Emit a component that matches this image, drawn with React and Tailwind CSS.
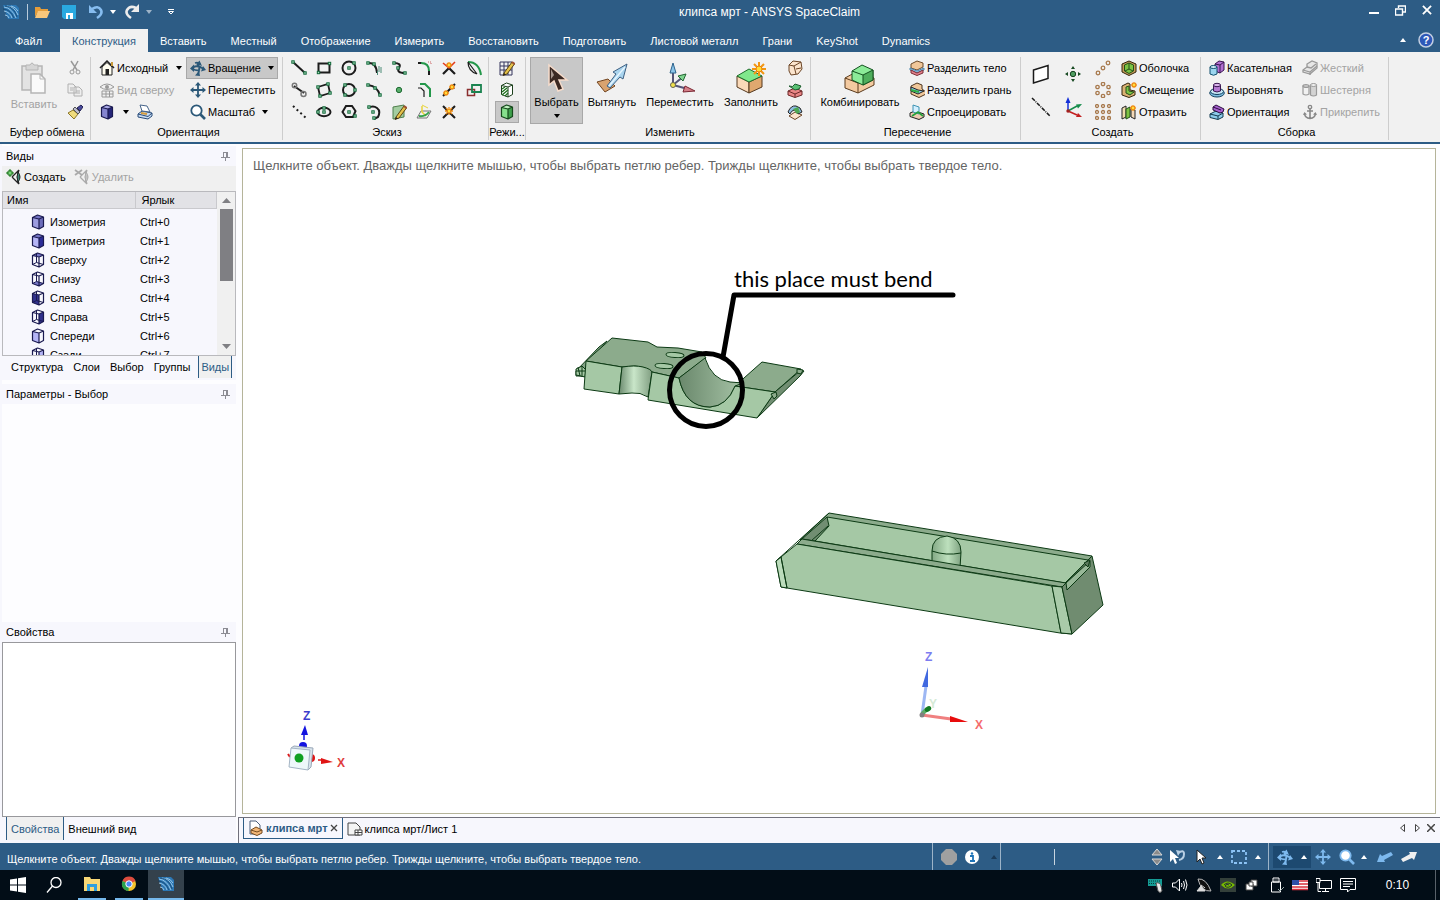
import { useState } from 'react';

const INK = '#1c1c1c';

const Icon = ({ size = 16, box = 16, className = '', children }) => (
  <svg
    width={size}
    height={size}
    viewBox={`0 0 ${box} ${box}`}
    fill="none"
    aria-hidden="true"
    className={`shrink-0 ${className}`}
  >
    {children}
  </svg>
);

const Caret = ({ up = false, className = '' }) => (
  <svg width="6" height="4" viewBox="0 0 6 4" aria-hidden="true" className={`shrink-0 ${className}`}>
    <path d={up ? 'M0 4h6L3 0z' : 'M0 0h6L3 4z'} fill="currentColor" />
  </svg>
);

// Box seen from above: each face can be filled on its own
const Box = ({ top = 'none', left = 'none', right = 'none', bottom = 'none', line = '#1a1a50', wire = false }) => (
  <Icon>
    <path d="M2.500 12.500 7.500 10.500 13.500 12.500 9 15z" fill={bottom} />
    <path d="M2.500 3.500 7.500 1 13.500 3 9 5z" fill={top} />
    <path d="M2.500 3.500 9 5V15L2.500 12.500z" fill={left} />
    <path d="M9 5 13.500 3V12.500L9 15z" fill={right} />
    <path d="M2.500 3.500 7.500 1 13.500 3V12.500L9 15 2.500 12.500zM2.500 3.500 9 5l4.500-2M9 5v10" stroke={line} strokeWidth="1.200" strokeLinejoin="round" />
    {wire && <path d="M6.500 1.500v9M6.500 10.500l-4 2M6.500 10.500l7 2" stroke={line} strokeWidth="1" />}
  </Icon>
);

const AppLogo = ({ size = 16 }) => (
  <Icon size={size}>
    <path d="M0 1h13l3 3v11H5z" fill="#2c77b4" />
    <path d="M1 3q8 1 12 11M4 2q8 1 11 9M1 7q6 1 8 7M8 2q5 1 7 5M2 11q3 0 4 3" stroke="#a4d0ee" strokeWidth=".9" />
    <path d="M0 5q7 0 11 9M2 2q9 0 12 11" stroke="#123f66" strokeWidth=".7" />
  </Icon>
);

const OrbitIcon = ({ color = '#2b5878', size = 16 }) => (
  <Icon size={size}>
    <path d="M3 7.500Q7 4.500 13 8.500M3 9Q6 11 10 10M7 3.500Q11 7 8 14M5 3Q8 2 10 4" stroke={color} strokeWidth="1.800" />
    <path d="M0 8.500 4 4.500V12zM16 10l-5 1.500 2-5.500zM9.500 .500 12 6 6.500 4zM5 15.500l5 .500-1-5z" fill={color} />
  </Icon>
);

const MoveIcon = ({ color = '#2b5878', size = 16 }) => (
  <Icon size={size}>
    <path d="M8 2v12M2 8h12" stroke={color} strokeWidth="1.800" />
    <path d="M8 0l3 3.500H5zM8 16l3-3.500H5zM0 8l3.500-3v6zM16 8l-3.500-3v6z" fill={color} />
  </Icon>
);

const ZoomIcon = ({ color = '#2b5878', fill = '#fff', size = 16 }) => (
  <Icon size={size}>
    <circle cx="6.500" cy="6.500" r="5.200" fill={fill} stroke={color} strokeWidth="1.800" />
    <path d="M10.500 10.500 15 15" stroke={color} strokeWidth="2.600" />
  </Icon>
);

const PinIcon = () => (
  <Icon size={9} box={9}>
    <path d="M2 .5h5M2.500 .5v5M6.500 .5v5M5.500 .5v5M0 5.500h9M4.500 5.500V9" stroke="#8b8b93" />
  </Icon>
);

const EyeIcon = ({ off = false }) => (
  <Icon>
    <path d="M6 8 13 1M6 8l7 7M13 1q-3 7 0 14" stroke={off ? '#aaa' : '#222'} strokeWidth="1.300" />
    <path d="M12 3q4 5 0 10-2-5 0-10z" fill={off ? '#c4c4c4' : '#3f8a78'} stroke={off ? '#aaa' : '#222'} />
    {off ? (
      <path d="M1 1l7 5M8 1 1 6" stroke="#aaa" strokeWidth="1.800" />
    ) : (
      <path d="M3 1h2v2h2v2H5v2H3V5H1V3h2z" fill="#7ad67a" stroke="#1c701c" />
    )}
  </Icon>
);

const dots = (points) =>
  points.map(([x, y]) => (
    <rect key={`${x}-${y}`} x={x - 1.2} y={y - 1.2} width="2.4" height="2.4" fill="#a9dabd" stroke="#146b3c" />
  ));

const burst = (x, y, r = 3) => (
  <g stroke="#f08a12" strokeWidth="1.300">
    <path d={`M${x - r} ${y}h${r * 2}M${x} ${y - r}v${r * 2}M${x - r + 1} ${y - r + 1}l${r * 2 - 2} ${r * 2 - 2}M${x + r - 1} ${y - r + 1}l${2 - r * 2} ${r * 2 - 2}`} />
    <circle cx={x} cy={y} r="1.200" fill="#ffe23c" stroke="none" />
  </g>
);

const pencil = (
  <g>
    <path d="M5 13 13 2l2.500 2L8 14l-4 1.500z" fill="#e5c24a" stroke="#5c4411" />
    <path d="M4 15.500 5 13l2 1.500z" fill="#222" />
    <path d="M13 2l2.500 2" stroke="#a05033" strokeWidth="2" />
  </g>
);

const sketchTools = [
  ['Линия', <><path d="M2 2l12 11" stroke={INK} strokeWidth="2" />{dots([[2, 2], [14, 13]])}</>],
  ['Прямоугольник', <><path d="M2.500 3.500h11v9h-11z" stroke={INK} strokeWidth="2" />{dots([[2.5, 12.5], [13.5, 3.5]])}</>],
  ['Окружность', <><circle cx="8" cy="8" r="6.500" stroke={INK} strokeWidth="2" />{dots([[8, 8], [13, 3]])}</>],
  ['Касательная дуга', <><path d="M2 3q8-1 9 10" stroke={INK} strokeWidth="2" /><path d="M13 6v6M15 7v6M11.500 11v4" stroke="#4a8b76" />{dots([[2, 3], [8, 4]])}</>],
  ['Сплайн', <><path d="M3 3q8 0 5 5t6 5" stroke={INK} strokeWidth="2" />{dots([[3, 3], [7, 8], [14, 13]])}</>],
  ['Скругление', <><path d="M2 3h4" stroke={INK} strokeWidth="2" /><path d="M5 3q8 0 8 8" stroke="#23974a" strokeWidth="2" /><path d="M13 11v4" stroke={INK} strokeWidth="2" /><path d="M12 2h3v3" stroke="#c66" strokeDasharray="1 1" /></>],
  ['Отсечь', <><path d="M2 14 8 8l6 6" stroke={INK} strokeWidth="2.200" /><path d="M2 3l6 5 6-6" stroke="#e23b1c" strokeWidth="1.600" />{burst(8, 5, 3)}</>],
  ['Изгиб', <><path d="M2 2q11 0 13 13" stroke="#23974a" strokeWidth="2" /><path d="M2 2q0 9 9 12M2 2l9 12" stroke={INK} strokeWidth="1.200" /></>],
  ['Касательная линия', <><path d="M3 4l10 7" stroke={INK} strokeWidth="2" /><circle cx="3.500" cy="3.500" r="2.200" stroke="#777" strokeWidth="1.500" /><circle cx="12.500" cy="12" r="2.500" stroke="#777" strokeWidth="1.500" /></>],
  ['Прямоугольник по трём точкам', <><path d="M2 5l10-3 2 9-10 3z" stroke={INK} strokeWidth="1.800" />{dots([[2, 5], [12, 2], [4, 14], [14, 11]])}</>],
  ['Окружность по трём точкам', <><circle cx="8" cy="8" r="6" stroke={INK} strokeWidth="2" />{dots([[4, 3], [14, 8], [4, 13]])}</>],
  ['Дуга по трём точкам', <><path d="M2 3q10 1 12 11" stroke={INK} strokeWidth="2" />{dots([[2, 3], [9, 6], [14, 13]])}</>],
  ['Точка', <circle cx="8" cy="8" r="2.700" fill="#58ad6a" stroke="#1f6b33" />],
  ['Смещение кривой', <><path d="M2 6h3l3 3v6" stroke={INK} strokeWidth="1.200" /><path d="M4 2h5l5 5v8" stroke="#23974a" strokeWidth="2" /></>],
  ['Разделить', <><path d="M2 14 14 2" stroke={INK} strokeWidth="2" /><path d="M11 4l3 3M3 9l3 3" stroke="#888" />{burst(5, 11, 3)}{burst(11, 5, 3)}</>],
  ['Масштабировать', <><path d="M1.500 7.500h7v6h-7z" stroke="#8b2f2f" strokeWidth="1.500" /><path d="M6 3h9v7H6z" stroke="#1b8350" strokeWidth="1.800" /></>],
  ['Вспомогательная линия', <path d="M2 2l13 12" stroke={INK} strokeWidth="2" strokeDasharray="2 3" />],
  ['Эллипс', <><ellipse cx="8" cy="8" rx="6.500" ry="4.300" stroke={INK} strokeWidth="2" />{dots([[8, 8], [8, 4], [2, 8]])}</>],
  ['Многоугольник', <><path d="M5 2h6l3.500 5L12 13H5L1.500 8z" stroke={INK} strokeWidth="2" />{dots([[8, 8], [14, 12]])}</>],
  ['Дуга', <><path d="M2 4q5-3 9 0t1 9l-4 2" stroke={INK} strokeWidth="2" />{dots([[3, 3], [7, 8], [8, 14]])}</>],
  ['Проекция', <><path d="M2 3l11-2v12L2 15z" fill="#a3cda0" stroke="#4f7f4c" />{pencil}</>],
  ['Проекция на эскиз', <><path d="M1 14l4-7h10l-4 7z" stroke="#777" /><path d="M6 2v6l4 4" stroke="#e8d33c" strokeWidth="1.500" /><path d="M3 12q6 1 10-4" stroke="#35a14b" strokeWidth="2" /><path d="M6 1l6 3" stroke="#e8d33c" /></>],
  ['Соединить', <><path d="M2 2l12 12M2 14 14 2" stroke={INK} strokeWidth="2" />{burst(8, 7, 4)}</>],
];

// Solids used in the small ribbon buttons
const solids = {
  splitBody: (
    <><path d="M2 4l6-3 6 2v4l-6 3-6-2z" fill="#f0c79a" stroke="#6b4a2a" /><path d="M1 8l7 3 7-3v2l-7 3-7-3z" fill="#8fc7ec" stroke="#4a86ad" /><path d="M2 10v3l6 2.500 6-2.500v-3l-6 3z" fill="#e3808b" stroke="#7a3038" /></>
  ),
  splitFace: (
    <><path d="M2 4l6-3 5 2v4l4 3v2l-7 3.500L2 12z" fill="#f0c79a" stroke="#4d3620" /><path d="M2 5l7 3 6 1-6 3-7-3z" fill="#8fc7ec" stroke="#222" /><path d="M2 8l8 2" stroke="#2fae43" strokeWidth="2" /></>
  ),
  project: (
    <><path d="M1 9l5-2 9 3v3l-5 2.500-9-3z" fill="#edcbb2" stroke="#222" /><path d="M4 1l6 2v7l-6-2z" fill="#d4efff" stroke="#3d93b2" /><path d="M3 12l6-4 5 4" stroke="#24a03a" strokeWidth="1.800" /></>
  ),
  shell: (
    <><path d="M1 4l7-3 7 3v8l-7 3.500L1 12z" fill="#c49a58" stroke="#33240c" /><path d="M3.500 5l4.500-2 4.500 2v6L8 13.500 3.500 11z" fill="#7cc343" stroke="#24501a" /><path d="M8 3v6l-4 2M8 9l4 2" stroke="#24501a" /></>
  ),
  offset: (
    <><path d="M1 4l6-3 2 1v6l5 1v4l-6 2.500L1 13z" fill="#d9b173" stroke="#33240c" /><path d="M5 5l3-1v5l5 1-4 3-4-2z" fill="#7cc343" stroke="#24501a" />{burst(13, 3, 3)}</>
  ),
  mirror: (
    <><path d="M1 4l4-2v11l-4 2z" fill="#efdcae" stroke="#222" /><path d="M5 5l4-2v10l-4 2z" fill="#7cc343" stroke="#24501a" /><path d="M10 5l4 1v9l-4-2z" fill="#f3d9b8" stroke="#222" />{burst(12, 4, 3)}</>
  ),
  tangent: (
    <><path d="M6 4l4-3 5 1v8l-4 3-5-2z" fill="#b06fd1" stroke="#38164f" /><path d="M6 4l5 1v8M11 5l4-3" stroke="#38164f" /><path d="M1 7v7q3.500 2.500 7 0V7z" fill="#9bd5ef" stroke="#12506e" /><ellipse cx="4.500" cy="7" rx="3.500" ry="1.500" fill="#d2eefa" stroke="#12506e" /></>
  ),
  align: (
    <><ellipse cx="8" cy="11" rx="7.300" ry="4" fill="#7fbfe2" stroke="#12405e" /><ellipse cx="8" cy="9.500" rx="6.500" ry="3" fill="#c8e8f6" stroke="#12405e" /><path d="M4.500 3v6q3.500 2 7 0V3z" fill="#b378d0" stroke="#38164f" /><ellipse cx="8" cy="3" rx="3.500" ry="1.700" fill="#d9b4ea" stroke="#38164f" /></>
  ),
  orient: (
    <><path d="M1 10l6-3 7 2v4l-5 2.500-8-2z" fill="#8ccbea" stroke="#123a4e" /><path d="M1 10l8 2 5-3M9 12v3" stroke="#123a4e" /><path d="M4 3l3-2 8 4-1 3-3 1-7-3z" fill="#a75fce" stroke="#2b0f40" /><path d="M4 3l8 3" stroke="#2b0f40" /></>
  ),
  rigid: (
    <><path d="M1 10l4-3V4l5-3 5 2v5l-7 6-7-2z" fill="#e6e6e6" stroke="#999" strokeWidth="1.300" /><path d="M1 10l7 2 7-6M5 7l4 1 5-4M8 12v3" stroke="#999" strokeWidth="1.300" /></>
  ),
  gear: (
    <><path d="M1 4v8q3 2 6 0V4z" stroke="#999" strokeWidth="1.200" /><ellipse cx="4" cy="4" rx="3" ry="1.500" stroke="#999" strokeWidth="1.200" /><path d="M8.500 3v10q3 2 6 0V3z" fill="#d3d3d3" stroke="#999" strokeWidth="1.200" /><ellipse cx="11.500" cy="3" rx="3" ry="1.500" fill="#eee" stroke="#999" /></>
  ),
  anchor: (
    <><circle cx="8" cy="3" r="1.700" stroke="#888" strokeWidth="1.300" /><path d="M8 5v10M5 7h6M2.500 9.500Q3 14 8 14.500q5-.500 5.500-5" stroke="#888" strokeWidth="1.600" /><path d="M1 11l1.500-3L5 10.500zM15 11l-1.500-3L11 10.500z" fill="#888" /></>
  ),
  blend: (
    <><path d="M2 5l4-4 8 1 1 7-4 5-7 1-2-4z" fill="#fbe4cd" stroke="#6b4526" /><path d="M2 5l5 1 2 8M7 6l7-4M9 9l5-1" stroke="#6b4526" /></>
  ),
  replace: (
    <><path d="M1 9l7-3 7 3v4l-7 2.500L1 13z" fill="#e98585" stroke="#6a2929" /><path d="M1 9l7 3 7-3M8 12v3" stroke="#6a2929" /><path d="M2 4q4 2 6-2l6 2q-1 4-6 4z" fill="#59c073" stroke="#1c5a2c" /></>
  ),
  patch: (
    <><path d="M2 12l6-4 7 3-7 4.500z" fill="#fbe4cd" stroke="#6b4526" /><path d="M1 8q3-7 8-6 5 1 6 6l-4 2q-1-4-4-4-3 1-4 4z" fill="#8cbce2" stroke="#222" /><path d="M6 5l5-2 2 5-3 2z" fill="#4da853" /></>
  ),
};

const SmallButton = ({ icon, label, disabled = false, active = false, caret = false, className = '' }) => (
  <button
    type="button"
    disabled={disabled}
    className={`flex h-[22px] items-center gap-0.5 whitespace-nowrap px-1 ${active ? 'bg-[#c8c8c8] outline outline-1 -outline-offset-1 outline-[#a8a8a8]' : ''} ${disabled ? 'text-[#a3a3a3]' : 'text-black'} ${className}`}
  >
    {icon}
    <span>{label}</span>
    {caret && <Caret className="ml-auto" />}
  </button>
);

const BigButton = ({ icon, label, active = false, disabled = false, caret = false, className = '' }) => (
  <button
    type="button"
    disabled={disabled}
    className={`flex h-[67px] flex-col items-center whitespace-nowrap pt-1 ${active ? 'border border-[#a8a8a8] bg-[#c8c8c8]' : 'border border-transparent'} ${disabled ? 'text-[#a3a3a3]' : 'text-black'} ${className}`}
  >
    {icon}
    <span className="leading-4">{label}</span>
    {caret && <Caret className="mt-1" />}
  </button>
);

const IconButton = ({ label, children, className = '' }) => (
  <button type="button" aria-label={label} title={label} className={`flex items-center justify-center ${className}`}>
    {children}
  </button>
);

const Group = ({ title, className = '', children }) => (
  <section className={`flex shrink-0 flex-col border-r border-[#cdcdcd] ${className}`}>
    <div className="flex h-[67px]">{children}</div>
    <h2 className="whitespace-nowrap text-center leading-4">{title}</h2>
  </section>
);

const ribbonTabs = [
  'Файл', 'Конструкция', 'Вставить', 'Местный', 'Отображение', 'Измерить', 'Восстановить',
  'Подготовить', 'Листовой металл', 'Грани', 'KeyShot', 'Dynamics',
];

const TitleBar = () => (
  <header className="flex h-6 items-center bg-[#2d5c85] text-white">
    <div className="mr-[104px] flex flex-1 items-center gap-3 pl-[3px]">
      <AppLogo />
      <div className="-ml-1 h-4 w-px bg-[#b9cbdb]" />
      <IconButton label="Открыть" className="-ml-1.5">
        <Icon><path d="M1 13V3h5l1 2h7v3H4z" fill="#e59d3a" /><path d="M1 14 4 7h12l-3 7z" fill="#f9c77b" /></Icon>
      </IconButton>
      <IconButton label="Сохранить">
        <Icon size={14} box={14}><path d="M0 0h14v14H2l-2-2z" fill="#2aa9e0" /><path d="M4 8h7v6H4z" fill="#fff" /><path d="M6 10h2v4H6z" fill="#2aa9e0" /></Icon>
      </IconButton>
      <IconButton label="Отменить" className="gap-1.5">
        <Icon><path d="M1 1v8h8z" fill="#86bdf0" /><path d="M4 5q6-4 9 1 2 4-4 8" stroke="#86bdf0" strokeWidth="2.600" /></Icon>
        <Caret />
      </IconButton>
      <IconButton label="Вернуть" className="-ml-1 gap-1.5">
        <Icon><path d="M15 0v8H7z" fill="#ececec" /><path d="M12 4Q6 1 3 6q-2 4 4 8" stroke="#ececec" strokeWidth="2.600" /></Icon>
        <Caret className="text-[#9eb4c8]" />
      </IconButton>
      <IconButton label="Настройка панели">
        <Icon size={6} box={6} className="ml-1"><path d="M0 .5h6M.5 2.500h5L3 5z" stroke="#fff" /></Icon>
      </IconButton>
    </div>
    <h1 className="whitespace-nowrap text-xs">клипса мрт - ANSYS SpaceClaim</h1>
    <div className="flex flex-1 items-center justify-end gap-4 pb-1 pr-2">
      <IconButton label="Свернуть"><Icon size={10} box={10}><path d="M0 8h10" stroke="#fff" strokeWidth="2" /></Icon></IconButton>
      <IconButton label="Восстановить окно"><Icon size={11} box={11}><path d="M3.500 3V1h7v6H8M.5 4h7v6h-7z" stroke="#fff" strokeWidth="1.400" /></Icon></IconButton>
      <IconButton label="Закрыть"><Icon size={10} box={11}><path d="M1 1l9 9M10 1l-9 9" stroke="#fff" strokeWidth="2" /></Icon></IconButton>
    </div>
  </header>
);

const Tabs = () => {
  const [current, setCurrent] = useState('Конструкция');
  return (
    <nav className="flex h-7 items-center bg-[#2d5c85] pl-[3px]">
      {ribbonTabs.map((tab) => (
        <button
          key={tab}
          type="button"
          onClick={() => setCurrent(tab)}
          className={`h-[23px] self-end whitespace-nowrap px-3 first:mr-1.5 ${tab === current ? 'bg-[#f1f1f1] text-[#2d5c85]' : 'text-white'}`}
        >
          {tab}
        </button>
      ))}
      <div className="ml-auto flex items-center gap-3 pr-1.5 pt-1 text-white">
        <IconButton label="Свернуть ленту"><Caret up /></IconButton>
        <IconButton label="Справка">
          <Icon box={16}>
            <circle cx="8" cy="8" r="7" fill="#2e58b8" stroke="#c3cfe2" strokeWidth="1.500" />
            <text x="8" y="12" fontSize="11" fontWeight="700" textAnchor="middle" fill="#fff">?</text>
          </Icon>
        </IconButton>
      </div>
    </nav>
  );
};

const Ribbon = () => (
  <div className="flex items-stretch overflow-hidden border-b-2 border-[#2d5c85] bg-[#f1f1f1] pb-0.5 pt-[5px]">
    <Group title="Буфер обмена" className="w-[91px] pl-1">
      <BigButton
        disabled
        label="Вставить"
        className="w-[60px]"
        icon={
          <Icon size={32} box={32} className="mb-0.5">
            <path d="M4 4h20v24H4z" fill="#e3e3e3" stroke="#b5b5b5" strokeWidth="1.500" />
            <path d="M8 3h4q2-4 4 0h4v5H8z" fill="#d6d6d6" stroke="#b5b5b5" />
            <path d="M13 12h9l5 5v14H13z" fill="#fafafa" stroke="#b5b5b5" strokeWidth="1.500" />
            <path d="M22 12v5h5" stroke="#b5b5b5" />
          </Icon>
        }
      />
      <div className="flex flex-col">
        <IconButton label="Вырезать" className="h-[22px] w-[22px]">
          <Icon><path d="M4 1l6 9M11 1 6 10" stroke="#999" strokeWidth="1.500" /><circle cx="5" cy="12" r="2" stroke="#999" /><circle cx="11" cy="12" r="2" stroke="#999" /></Icon>
        </IconButton>
        <IconButton label="Копировать" className="h-[22px] w-[22px]">
          <Icon><path d="M1 2h5l3 3v6H1zM7 5h5l3 3v6H7z" fill="#eee" stroke="#b0b0b0" /><path d="M9 9h4M9 11h4M3 6h3M3 8h3" stroke="#b0b0b0" /></Icon>
        </IconButton>
        <IconButton label="Формат по образцу" className="h-[22px] w-[22px]">
          <Icon><path d="M1 9l5-3 5 4-4 5z" fill="#f0dc7c" stroke="#8a7428" /><path d="M6 5l5 5 2-2-5-5z" fill="#b9b9cc" stroke="#555" /><path d="M10 4l4-3 2 2-3 4z" fill="#4a4a9a" stroke="#222255" /></Icon>
        </IconButton>
      </div>
    </Group>

    <Group title="Ориентация" className="w-[192px] pl-1">
      <div className="flex w-[91px] flex-col">
        <SmallButton caret label="Исходный" icon={<Icon><path d="M1 8 8 1l7 7" stroke="#222" strokeWidth="1.500" /><path d="M3 7v8h10V7L8 2.500z" fill="#fffdf0" stroke="#222" /><path d="M6.500 9h3.500v6H6.500z" fill="#222" /><path d="M12 2h2v4h-2z" fill="#c89a3a" /></Icon>} />
        <SmallButton disabled label="Вид сверху" icon={<Icon><path d="M1 5q7-6 14 0-7 5-14 0z" stroke="#999" /><circle cx="8" cy="5" r="2" fill="#999" /><path d="M3 9h11v6H3zM3 12h11M7 9v6M10.500 9v6" stroke="#999" /></Icon>} />
        <div className="flex h-[22px] items-center gap-2 pl-1">
          <IconButton label="Проекция" className="gap-2"><Box top="#a9a9e6" left="#8585d0" right="#26267a" /><Caret /></IconButton>
          <IconButton label="Вид на плоскость">
            <Icon><path d="M1 10l4-3 10 2v3l-4 3-10-2z" fill="#c9dcf2" stroke="#274a78" /><path d="M1 10l10 2.500L15 9" stroke="#274a78" /><path d="M3 1l7 1 3 6-8-1z" fill="#fff" stroke="#46648a" /><path d="M4 9l6 1" stroke="#d49b3d" strokeWidth="2" /></Icon>
          </IconButton>
        </div>
      </div>
      <div className="flex w-[92px] flex-col">
        <SmallButton active caret label="Вращение" icon={<OrbitIcon />} />
        <SmallButton label="Переместить" icon={<MoveIcon />} />
        <SmallButton label="Масштаб" caret icon={<ZoomIcon />} className="w-[86px]" />
      </div>
    </Group>

    <Group title="Эскиз" className="w-[206px] pl-[3px]">
      <div className="grid grid-cols-8 content-start">
        {sketchTools.map(([label, art]) => (
          <IconButton key={label} label={label} className="h-[22px] w-[25px]"><Icon>{art}</Icon></IconButton>
        ))}
      </div>
    </Group>

    <Group title="Режи..." className="w-[37px]">
      <div className="flex w-full flex-col items-center">
        <IconButton label="Режим эскиза" className="h-[22px] w-6"><Icon><path d="M1 2h12v13H1zM1 6h12M1 10h12M5 2v13M9 2v13" stroke="#34345c" />{pencil}</Icon></IconButton>
        <IconButton label="Режим сечения" className="h-[22px] w-6"><Icon><path d="M2.500 3.500 7.500 1 13.500 3V12.500L9 15 2.500 12.500zM2.500 3.500 9 5l4.500-2M9 5v10" stroke="#1c401c" fill="#fff" /><path d="M3 7l3-2M3 10l5-4M3 13l6-5M6 14l3-3" stroke="#1c701c" strokeWidth="1.300" /></Icon></IconButton>
        <IconButton label="Трёхмерный режим" className="h-[22px] w-6 border border-[#a8a8a8] bg-[#c8c8c8]"><Box top="#c0f2c0" left="#86e08c" right="#3fa04c" line="#164a1c" /></IconButton>
      </div>
    </Group>

    <Group title="Изменить" className="w-[285px] pl-1">
      <BigButton active caret label="Выбрать" className="w-[53px]" icon={
        <Icon size={32} box={32}>
          <path d="M8 3v20l5-4 4 10 5-2-4-9h8z" fill="#3a2822" stroke="#f6dccb" strokeWidth="1.500" />
          <path d="M10 7v10l3-4z" fill="#a89890" />
        </Icon>
      } />
      <BigButton label="Вытянуть" className="w-[58px]" icon={
        <Icon size={32} box={32}>
          <path d="M1 20l11-3 7 7-10 6z" fill="#d9a36f" stroke="#704420" />
          <path d="M11 24 20 12l-3-2L31 2l-4 15-3-2-10 11z" fill="#a9d4ee" stroke="#3d5f82" strokeLinejoin="round" />
          <path d="M13 24 29 5" stroke="#e5f5ff" strokeWidth="1.500" />
        </Icon>
      } />
      <BigButton label="Переместить" className="w-[78px]" icon={
        <Icon size={32} box={32}>
          <path d="M9 23V9M9 23l11-9M9 23l15 4" stroke="#557" strokeWidth="2" />
          <path d="M9 1l3 10H6z" fill="#8bc5ea" stroke="#2c628c" />
          <path d="M22 12l-3 7-5-5z" fill="#80d590" stroke="#226632" />
          <path d="M31 29l-12 1 2-6z" fill="#d47f88" stroke="#7a2632" />
          <circle cx="9" cy="23" r="2.500" fill="#f0e04c" stroke="#665" />
        </Icon>
      } />
      <BigButton label="Заполнить" className="w-[64px]" icon={
        <Icon size={32} box={32}>
          <path d="M2 14l12 6v11L2 25z" fill="#fad9b8" stroke="#54381e" />
          <path d="M14 20l13-6v11l-13 6z" fill="#dfa86f" stroke="#54381e" />
          <path d="M2 14l12-7 13 7-13 6z" fill="#80e88c" stroke="#1d6d2a" />
          <path d="M24 0v14M17 7h14M19 2l10 10M29 2 19 12" stroke="#f39612" strokeWidth="2" />
          <circle cx="24" cy="7" r="3" fill="#ffdd35" stroke="#e87e10" />
        </Icon>
      } />
      <div className="flex flex-col">
        <IconButton label="Скругление граней" className="h-[22px] w-6"><Icon>{solids.blend}</Icon></IconButton>
        <IconButton label="Заменить" className="h-[22px] w-6"><Icon>{solids.replace}</Icon></IconButton>
        <IconButton label="Сопряжение" className="h-[22px] w-6"><Icon>{solids.patch}</Icon></IconButton>
      </div>
    </Group>

    <Group title="Пересечение" className="w-[210px] pl-1">
      <BigButton label="Комбинировать" className="w-[90px]" icon={
        <Icon size={32} box={32}>
          <path d="M1 16l11-6 18 6v7l-16 8L1 26z" fill="#f4caa0" stroke="#5a3b1d" />
          <path d="M1 16l13 5v10M14 21l5-2" stroke="#5a3b1d" />
          <path d="M8 9l10-6 11 5v10l-10 5-11-5z" fill="#8ceb98" stroke="#14521f" />
          <path d="M19 13l10-5v10l-10 5z" fill="#4fae5c" stroke="#14521f" />
          <path d="M8 9l11 4" stroke="#14521f" />
        </Icon>
      } />
      <div className="flex flex-col">
        <SmallButton label="Разделить тело" icon={<Icon>{solids.splitBody}</Icon>} />
        <SmallButton label="Разделить грань" icon={<Icon>{solids.splitFace}</Icon>} />
        <SmallButton label="Спроецировать" icon={<Icon>{solids.project}</Icon>} />
      </div>
    </Group>

    <Group title="Создать" className="w-[180px] pl-1">
      <div className="flex w-8 flex-col">
        <IconButton label="Плоскость" className="h-[33px]"><Icon size={20} box={20}><path d="M2.500 6 17 1.500v13L2.500 19z" fill="#fff" stroke="#1a1a1a" strokeWidth="1.500" /></Icon></IconButton>
        <IconButton label="Ось" className="h-[33px]"><Icon size={20} box={20}><path d="M1 1l18 18" stroke="#1a1a1a" strokeWidth="1.500" strokeDasharray="4 1 1 1" /></Icon></IconButton>
      </div>
      <div className="flex w-8 flex-col">
        <IconButton label="Опорная точка" className="h-[33px]"><Icon><circle cx="8" cy="8" r="2.700" fill="#4f9d60" stroke="#164420" /><path d="M8 0l2 3H6zM8 16l2-3H6zM0 8l3-2v4zM16 8l-3-2v4z" fill="#174a22" /></Icon></IconButton>
        <IconButton label="Система координат" className="h-[33px]">
          <Icon size={20} box={20}><path d="M5 14V4" stroke="#1430d8" strokeWidth="1.500" /><path d="M5 0l2.500 6h-5z" fill="#1430d8" /><path d="M5 14l9-5" stroke="#148c4a" strokeWidth="1.500" /><path d="M19 7l-6 .5 2 4z" fill="#148c4a" /><path d="M5 14l9 4" stroke="#c22020" strokeWidth="1.500" /><path d="M19 20l-6 0 2-4z" fill="#c22020" /><circle cx="5" cy="14" r="1.700" fill="#a32020" /></Icon>
        </IconButton>
      </div>
      <div className="flex w-7 flex-col">
        <IconButton label="Линейный массив" className="h-[22px]"><Icon><g stroke="#a87a4e" strokeWidth="1.300"><circle cx="3" cy="13" r="1.800" /><circle cx="8" cy="8" r="1.800" /><circle cx="13" cy="3" r="1.800" /></g></Icon></IconButton>
        <IconButton label="Круговой массив" className="h-[22px]"><Icon><g stroke="#a87a4e" strokeWidth="1.300">{[[8, 2], [13.5, 5], [13.5, 11], [8, 14], [2.5, 11], [2.5, 5]].map(([x, y]) => <circle key={`${x}${y}`} cx={x} cy={y} r="1.700" />)}</g></Icon></IconButton>
        <IconButton label="Массив заполнения" className="h-[22px]"><Icon><g stroke="#a87a4e" strokeWidth="1.300">{[2, 8, 14].map((y) => [2, 8, 14].map((x) => <circle key={`${x}${y}`} cx={x} cy={y} r="1.500" />))}</g></Icon></IconButton>
      </div>
      <div className="flex flex-col">
        <SmallButton label="Оболочка" icon={<Icon>{solids.shell}</Icon>} />
        <SmallButton label="Смещение" icon={<Icon>{solids.offset}</Icon>} />
        <SmallButton label="Отразить" icon={<Icon>{solids.mirror}</Icon>} />
      </div>
    </Group>

    <Group title="Сборка" className="w-[188px] pl-1">
      <div className="flex w-[93px] flex-col">
        <SmallButton label="Касательная" icon={<Icon>{solids.tangent}</Icon>} />
        <SmallButton label="Выровнять" icon={<Icon>{solids.align}</Icon>} />
        <SmallButton label="Ориентация" icon={<Icon>{solids.orient}</Icon>} />
      </div>
      <div className="flex flex-col">
        <SmallButton disabled label="Жесткий" icon={<Icon>{solids.rigid}</Icon>} />
        <SmallButton disabled label="Шестерня" icon={<Icon>{solids.gear}</Icon>} />
        <SmallButton disabled label="Прикрепить" icon={<Icon>{solids.anchor}</Icon>} />
      </div>
    </Group>
  </div>
);

const views = [
  { name: 'Изометрия', key: 'Ctrl+0', box: { top: '#7474c4', left: '#9c9ce0', right: '#6c6cba' } },
  { name: 'Триметрия', key: 'Ctrl+1', box: { top: '#7474c4', left: '#b4b4f6', right: '#2c2c98' } },
  { name: 'Сверху', key: 'Ctrl+2', box: { top: '#7474c4', wire: true } },
  { name: 'Снизу', key: 'Ctrl+3', box: { bottom: '#7474c4', wire: true } },
  { name: 'Слева', key: 'Ctrl+4', box: { left: '#30308c', wire: true } },
  { name: 'Справа', key: 'Ctrl+5', box: { right: '#30308c', wire: true } },
  { name: 'Спереди', key: 'Ctrl+6', box: { left: '#b4b4f6' } },
  { name: 'Сзади', key: 'Ctrl+7', box: { right: '#b4b4f6', wire: true } },
];

const PanelHeader = ({ title }) => (
  <div className="flex h-5 items-center justify-between bg-[#f7f7fd] pl-1 pr-1.5">
    <h2>{title}</h2>
    <IconButton label={`Закрепить: ${title}`}><PinIcon /></IconButton>
  </div>
);

const Sidebar = () => (
  <aside className="flex w-[236px] shrink-0 flex-col border-l-2 border-[#f7f7fd] pt-0.5">
    <PanelHeader title="Виды" />
    <div className="flex h-[25px] items-center gap-1 bg-[#f0f0f0] pb-1 pl-1">
      <button type="button" className="flex items-center gap-0.5"><EyeIcon />Создать</button>
      <button type="button" disabled className="ml-1 flex items-center gap-0.5 text-[#a3a3a3]"><EyeIcon off />Удалить</button>
    </div>
    <div className="flex h-[165px] border border-[#b9b9bd] bg-[#f7f7fd]">
      <div className="flex-1 overflow-hidden">
        <table className="w-full table-fixed border-collapse text-left">
          <thead>
            <tr className="h-4 border-b border-[#c9c9cd] bg-[#e2e2e6]">
              <th className="w-[132px] border-r border-[#c9c9cd] py-0 pl-1 font-normal">Имя</th>
              <th className="border-r border-[#c9c9cd] py-0 pl-1.5 font-normal">Ярлык</th>
            </tr>
          </thead>
          <tbody>
            <tr className="h-1"><td colSpan="2" className="p-0" /></tr>
            {views.map((view) => (
              <tr key={view.name} className="h-[19px]">
                <td className="py-0 pl-[27px]">
                  <span className="flex items-center gap-1"><Box {...view.box} />{view.name}</span>
                </td>
                <td className="py-0 pl-[5px]">{view.key}</td>
              </tr>
            ))}
          </tbody>
        </table>
      </div>
      <div className="flex w-[18px] flex-col items-center bg-[#f0f0f0] py-1 text-[#7f7f83]">
        <Icon size={9} box={9}><path d="M0 7h9L4.500 2z" fill="currentColor" /></Icon>
        <div className="mt-1 h-[72px] w-[13px] bg-[#7f7f83]" />
        <Icon size={9} box={9} className="mt-auto"><path d="M0 2h9L4.500 7z" fill="currentColor" /></Icon>
      </div>
    </div>
    <div className="flex h-6 items-start gap-1.5 bg-[#f7f7fd] pl-[7px] [&>button]:h-[22px] [&>button]:px-0.5">
      <button type="button">Структура</button>
      <button type="button">Слои</button>
      <button type="button">Выбор</button>
      <button type="button">Группы</button>
      <button type="button" className="border-x border-[#2d5c85] bg-[#f0f0f0] text-[#2d5c85]">Виды</button>
    </div>
    <div className="mt-1 flex flex-1 flex-col">
      <PanelHeader title="Параметры - Выбор" />
    </div>
    <PanelHeader title="Свойства" />
    <div className="h-[175px] border border-[#98989c] bg-white" />
    <div className="flex h-[26px] items-start bg-[#f7f7fd] pl-1 [&>button]:h-[23px] [&>button]:px-1">
      <button type="button" className="border-x border-[#2d5c85] bg-[#f0f0f0] text-[#2d5c85]">Свойства</button>
      <button type="button">Внешний вид</button>
    </div>
  </aside>
);

const LINE = '#0c3a14';

// Group origin is shifted so both parts share the window's coordinate space
const Scene = () => (
  <svg className="absolute inset-0 h-full w-full" aria-label="Трёхмерная сцена">
    <defs>
      <linearGradient id="bore" x1="0" x2="1">
        <stop offset="0" stopColor="#6a886c" />
        <stop offset="1" stopColor="#a6c3a6" />
      </linearGradient>
      <linearGradient id="neck" x1="0" x2="1">
        <stop offset="0" stopColor="#6b8a6e" />
        <stop offset=".45" stopColor="#c9e6c9" />
        <stop offset="1" stopColor="#809e81" />
      </linearGradient>
      <linearGradient id="peg" x1="0" x2="1">
        <stop offset="0" stopColor="#83a985" />
        <stop offset=".55" stopColor="#bde0bd" />
        <stop offset="1" stopColor="#7fa381" />
      </linearGradient>
    </defs>
    <g transform="translate(-243 -149)" strokeLinejoin="round">
      <g stroke={LINE} strokeWidth="1">
        <path d="M599 347l-23 24v5l10 0 3-14 18-21z" fill="#83a486" />
        <path d="M576 369l6-3 4 4-1 7-9-2z" fill="#a5c8a5" />
        <path d="M578 367l2 9M582 366v11M576 371h9" fill="none" />
        <path d="M586 361 612 338 648 342 657 347 678 348 702 352 706 358 679 378 652 372Q646 367 635 366L622 367z" fill="#8cab8c" />
        <path d="M735 386 762 362 801 369 775 392z" fill="#8cab8c" />
        <path d="M775 392 801 370 804 371 800 376 757 418z" fill="#718e72" />
        <path d="M586 361 622 367 619 394 584 389z" fill="#a5c8a5" />
        <path d="M622 367Q635 365 643 367T652 372L648 397Q640 392 632 393L619 394z" fill="url(#neck)" />
        <path d="M652 372 679 378Q685 407 710 407 727 406 735 386L775 392 757 418 648 400z" fill="#a5c8a5" />
        <path d="M679 378 705 358Q712 380 730 382L743 383 735 386Q727 406 710 407 685 407 679 378z" fill="url(#bore)" />
        <path d="M771 394l5-2 1 4-3 3zM797 369l6 1-2 4-4-1z" fill="#8cab8c" />
        <ellipse cx="675" cy="355" rx="9" ry="2.500" fill="#a5c8a5" transform="rotate(4 675 355)" />
        <ellipse cx="664" cy="366" rx="9" ry="2.500" fill="#a5c8a5" transform="rotate(4 664 366)" />
      </g>

      <g stroke={LINE} strokeWidth="1">
        <path d="M829 513 1092 556 1088 560 1065 583 800 540z" fill="#8cab8c" />
        <path d="M827 517 1088 560 1065 583 815 541z" fill="#a5c8a5" />
        <path d="M827 517 829 526 815 541 802 539z" fill="#718e72" />
        <path d="M828 526 811 541" fill="none" />
        <path d="M932 566 932 551Q932 537 947 536 961 538 961 552L960 568z" fill="url(#peg)" />
        <path d="M932 551q14 5 29 2" fill="none" />
        <path d="M802 539 1066 583 1062 587 797 544z" fill="#8cab8c" />
        <path d="M797 544 1052 586 1062 587 1072 634 1060 633 787 588 781 587 776 561z" fill="#a5c8a5" />
        <path d="M776 561 781 557 787 588 781 587z" fill="#bcdcbc" />
        <path d="M1052 586 1061 633M781 557 787 588M776 561 829 513" fill="none" />
        <path d="M1052 586 1062 587 1072 634 1061 633z" fill="#a9cba9" />
        <path d="M1066 583 1092 556 1103 605 1072 634 1062 587z" fill="#708c70" />
        <path d="M1066 583 1090 561 1090 567 1067 590z" fill="#98b898" />
        <path d="M1084 563l6-3-2 7z" fill="#5d7b5f" />
      </g>

      <g fill="none" stroke="#000" strokeWidth="5">
        <circle cx="706" cy="390" r="36.500" />
        <path d="M723 357 734 295H953" strokeLinecap="round" />
      </g>
      <text x="734" y="287" fontSize="22" fontFamily="Lato, sans-serif" fill="#000">this place must bend</text>

      <g fontFamily="'Liberation Sans', sans-serif" fontSize="12" fontWeight="700">
        <path d="M922 715 926 686" stroke="#9db7f3" strokeWidth="3" />
        <path d="M928 667l0 20h-6z" fill="#4169e0" />
        <path d="M922 715l29 4" stroke="#f08080" strokeWidth="3" />
        <path d="M968 722l-18-6v6z" fill="#e80c0c" />
        <path d="M922 714l5-5" stroke="#5faa68" strokeWidth="4" />
        <ellipse cx="928" cy="709" rx="3.500" ry="2.500" fill="#137a22" transform="rotate(-35 928 709)" />
        <circle cx="922" cy="715" r="2.500" fill="#808080" />
        <text x="925" y="661" fill="#7c7cf0">Z</text>
        <text x="975" y="729" fill="#f46c6c">X</text>
        <text x="929" y="708" fill="#d6ead6">Y</text>
      </g>

      <g fontFamily="'Liberation Sans', sans-serif" fontSize="12" fontWeight="700">
        <path d="M304 740v-8" stroke="#1414e0" strokeWidth="1.500" />
        <path d="M305 725l3 10h-7z" fill="#1414e0" />
        <circle cx="303" cy="746" r="4" fill="#1414e0" />
        <circle cx="311" cy="758" r="4" fill="#e01414" />
        <path d="M288 754l2 3" stroke="#e01414" strokeWidth="2" />
        <path d="M318 760h6" stroke="#e01414" strokeWidth="1.500" />
        <path d="M333 762l-12-4v6z" fill="#e01414" />
        <path d="M291 748l3-2 19 2-2 19-3 3" fill="#d9e4ec" stroke="#9aa8b8" />
        <path d="M291 748l19 2-2 20-19-3z" fill="#eef8fa" stroke="#a4b4c4" />
        <circle cx="299" cy="758" r="4.500" fill="#10a020" />
        <text x="303" y="720" fill="#3c3ccc">Z</text>
        <text x="337" y="767" fill="#e03c3c">X</text>
      </g>
    </g>
  </svg>
);

const Workspace = () => (
  <main className="flex min-w-0 flex-1 flex-col pl-1.5 pt-1">
    <div className="relative mr-1 flex-1 overflow-hidden border border-[#b5b49a] bg-white">
      <Scene />
      <p className="relative px-2.5 pt-2 text-[13px] leading-[18px] text-[#646464]">
        Щелкните объект. Дважды щелкните мышью, чтобы выбрать петлю ребер. Трижды щелкните, чтобы выбрать твердое тело.
      </p>
    </div>
    <div className="-ml-1 mt-[3px] flex h-[26px] items-start border-l border-t border-[#70707c] bg-[#f7f7fd] pl-1">
      <div className="flex h-[21px] items-center border border-t-0 border-[#2d5c85] pl-1 pr-1">
        <button type="button" className="flex items-center gap-0.5 font-bold text-[#2d5c85]">
          <Icon><path d="M2 1h6l4 4v9H2z" fill="#fff" stroke="#4a5f7a" /><path d="M3 10l5-3 6 3v3l-5 2.500L3 13z" fill="#f3b777" stroke="#744b20" /><path d="M3 10l6 2 5-2" stroke="#744b20" /></Icon>
          клипса мрт
        </button>
        <IconButton label="Закрыть вкладку" className="ml-0.5"><Icon size={8} box={8}><path d="M1 1l6 6M7 1 1 7" stroke="#444" strokeWidth="1.300" /></Icon></IconButton>
      </div>
      <button type="button" className="flex h-[22px] items-center gap-0.5 pl-1">
        <Icon><path d="M1 2h8l4 4v8H1z" fill="#f4f4f4" stroke="#444" /><path d="M8 9h7v5H8zM8 11.500h7M11 9v5" fill="#fff" stroke="#444" /></Icon>
        клипса мрт/Лист 1
      </button>
      <div className="ml-auto flex h-5 items-center gap-1.5 pr-[5px]">
        <IconButton label="Предыдущая вкладка"><Icon size={8} box={8}><path d="M5.500 .5v7L1.500 4z" stroke="#444" /></Icon></IconButton>
        <IconButton label="Следующая вкладка"><Icon size={8} box={8}><path d="M2.500 .5v7l4-3.500z" stroke="#444" /></Icon></IconButton>
        <IconButton label="Закрыть документ"><Icon size={8} box={8}><path d="M0 0l8 8M8 0 0 8" stroke="#444" strokeWidth="1.500" /></Icon></IconButton>
      </div>
    </div>
  </main>
);

const StatusBar = () => (
  <footer className="flex h-[27px] items-center bg-[#2d5c85] text-white">
    <p className="flex-1 truncate pl-[7px] pt-1">
      Щелкните объект. Дважды щелкните мышью, чтобы выбрать петлю ребер. Трижды щелкните, чтобы выбрать твердое тело.
    </p>
    <div className="flex h-full w-[69px] items-center gap-2 border-x border-[#9db4c8] pl-2">
      <IconButton label="Остановить"><Icon><path d="M5 0h6l5 5v6l-5 5H5l-5-5V5z" fill="#a0a0a0" /></Icon></IconButton>
      <IconButton label="Сообщения" className="gap-3">
        <Icon size={14} box={14}><circle cx="7" cy="7" r="7" fill="#fff" /><path d="M5 6h3v5M5 11h5" stroke="#1f74b8" strokeWidth="1.800" /><circle cx="7" cy="3.500" r="1.200" fill="#1f74b8" /></Icon>
        <Caret up className="text-[#1a3a58]" />
      </IconButton>
    </div>
    <div className="h-4 w-[54px] border-r border-[#c8d5e0]" />
    <div className="flex h-full w-[214px] items-center justify-end border-r border-[#9db4c8] pr-1">
      <IconButton label="Уровень выбора" className="w-5"><Icon size={18} box={18}><path d="M4 7l5-6 5 6zM4 11l5 6 5-6z" fill="#8a8a8a" stroke="#d8d8d8" /></Icon></IconButton>
      <IconButton label="Вернуть выбор" className="w-5"><Icon><path d="M1 1v12l3-3 2 5 2-1-2-5h4z" fill="#fff" /><path d="M9 4q6-4 6 1t-5 6" stroke="#b8cfe4" strokeWidth="2" /><path d="M7 1l5 1-3 5z" fill="#b8cfe4" /></Icon></IconButton>
      <IconButton label="Выбрать" className="w-[41px] gap-2"><Icon><path d="M4 1v12l3-3 2 5 2-1-2-5h4z" fill="#fff" stroke="#222" /></Icon><Caret up /></IconButton>
      <IconButton label="Выделение рамкой" className="w-9 gap-2"><Icon><path d="M1 2h14v12H1z" stroke="#8cc3f5" strokeWidth="1.800" strokeDasharray="3 2" /></Icon><Caret up /></IconButton>
    </div>
    <div className="flex h-full w-[171px] items-center pl-1">
      <IconButton label="Вращение" className="h-[22px] w-[38px] gap-2 bg-[#1d4970]"><OrbitIcon color="#7db9ee" /><Caret up /></IconButton>
      <IconButton label="Панорама" className="w-6"><MoveIcon color="#7db9ee" /></IconButton>
      <IconButton label="Масштаб" className="w-9 gap-1.5"><ZoomIcon color="#7db9ee" /><Caret up /></IconButton>
      <IconButton label="Предыдущий вид" className="ml-0.5 w-6"><Icon><path d="M0 13l3-8 2 2 9-4 2 3-9 5 1 2z" fill="#7db9ee" /></Icon></IconButton>
      <IconButton label="Следующий вид" className="w-6"><Icon><path d="M16 3l-3 8-2-2-9 4-2-3 9-5-1-2z" fill="#f0f0f0" /></Icon></IconButton>
    </div>
  </footer>
);

const tray = [
  ['Клавиатура', <><path d="M0 2h14v7H0z" fill="#159b94" /><path d="M1 4h12M1 6.500h12" stroke="#083c3a" strokeDasharray="1 1" /><path d="M8 6q4-1 5 3l1 5q-2 3-4 0z" fill="#e8e8e8" stroke="#555" /></>],
  ['Громкость', <><path d="M.5 6h3l4-4v12l-4-4h-3z" stroke="#fff" /><path d="M9.500 6q1 2 0 4M11.500 4q2 4 0 8M13.500 2.500q3 5.500 0 11" stroke="#fff" /></>],
  ['Спутник', <><path d="M2 2q8-1 13 12-10 1-13-12z" fill="#111" stroke="#bbb" /><path d="M1 14l4-5 4 5zM5 8l4 3" fill="#ddd" stroke="#ddd" /></>],
  ['Графика', <><path d="M0 1h16v14H0z" fill="#34403a" /><path d="M1 8q6-7 14 0-7 7-14 0z" fill="#76b900" /><path d="M4 8q4-4 8 0-4 4-7 1 2-3 4-1" stroke="#233" /></>],
  ['Окна', <><path d="M7 3h6v6H7zM2 7h7v6H2z" fill="#fff" stroke="#444" /><path d="M5 5h4v4H5z" fill="#fff" stroke="#444" /></>],
  ['Извлечение устройства', <><path d="M5 1h6v4H5zM3.500 5h9v10h-9z" stroke="#fff" /><path d="M7 2.500v1M9 2.500v1" stroke="#fff" /><path d="M10 12l2 2 4-4" stroke="#9aa" /></>],
  ['Язык ввода', <><path d="M0 3h16v10H0z" fill="#fff" /><path d="M0 4h16M0 7h16M0 10h16M0 12.500h16" stroke="#d8303c" strokeWidth="1.400" /><path d="M0 3h7v5H0z" fill="#2f4fa8" /></>],
  ['Сеть', <><path d="M3.500 3.500h12v8h-12zM9.500 11.500v3M6 14.500h7" stroke="#fff" /><path d="M0 1.500h4v4H0z" fill="#020d17" stroke="#fff" /><path d="M2 5.500v9h3" stroke="#fff" /></>],
  ['Уведомления', <><path d="M.5 1.500h15v11H10L7.500 15v-2.500h-7z" stroke="#fff" /><path d="M3 4.500h10M3 7h10M3 9.500h7" stroke="#fff" /></>],
];

const Taskbar = () => (
  <div className="flex h-[30px] items-center bg-[#020d17] text-white">
    <IconButton label="Пуск" className="h-full w-9"><Icon><path d="M0 2.500 7 1.500v6H0zM8 1.300 16 0v7.500H8zM0 8.500h7v6l-7-1zM8 8.500h8V16l-8-1.300z" fill="#fff" /></Icon></IconButton>
    <IconButton label="Поиск" className="h-full w-9"><Icon><circle cx="10" cy="5.500" r="5" stroke="#fff" strokeWidth="1.300" /><path d="M6.500 9 1 15.500" stroke="#fff" strokeWidth="1.300" /></Icon></IconButton>
    <IconButton label="Проводник" className="ml-1.5 h-full w-7 border-b-2 border-[#76b9ed]"><Icon><path d="M0 1h6l1 2h9v12H0z" fill="#f8d775" /><path d="M3 15V8h10v7h-3v-4H6v4z" fill="#2f9fe0" /></Icon></IconButton>
    <IconButton label="Браузер" className="ml-[9px] h-full w-7 border-b-2 border-[#76b9ed]">
      <Icon><circle cx="8" cy="8" r="7" fill="#f4c22b" /><path d="M8 8 1.500 5A7 7 0 0 1 14.500 5z" fill="#dd4b3e" /><path d="M8 8 1.500 5A7 7 0 0 0 7.500 15z" fill="#2ba24c" /><circle cx="8" cy="8" r="3.200" fill="#4a8af4" stroke="#fff" /></Icon>
    </IconButton>
    <IconButton label="SpaceClaim" className="ml-[5px] h-full w-9 border-b-2 border-[#76b9ed] bg-[#34414c]"><AppLogo /></IconButton>
    <div className="ml-auto flex items-center">
      {tray.map(([label, art]) => (
        <IconButton key={label} label={label} className="w-6"><Icon>{art}</Icon></IconButton>
      ))}
      <time className="w-[75px] text-center text-xs">0:10</time>
    </div>
    <div className="h-full w-[5px] border-l border-[#59616a]" />
  </div>
);

const App = () => (
  <div className="flex min-h-screen flex-col bg-[#fdfdff] font-['Liberation_Sans',Arial,sans-serif] text-[11px] leading-4 text-black">
    <TitleBar />
    <Tabs />
    <Ribbon />
    <div className="flex flex-1">
      <Sidebar />
      <Workspace />
    </div>
    <StatusBar />
    <Taskbar />
  </div>
);

export default App;
